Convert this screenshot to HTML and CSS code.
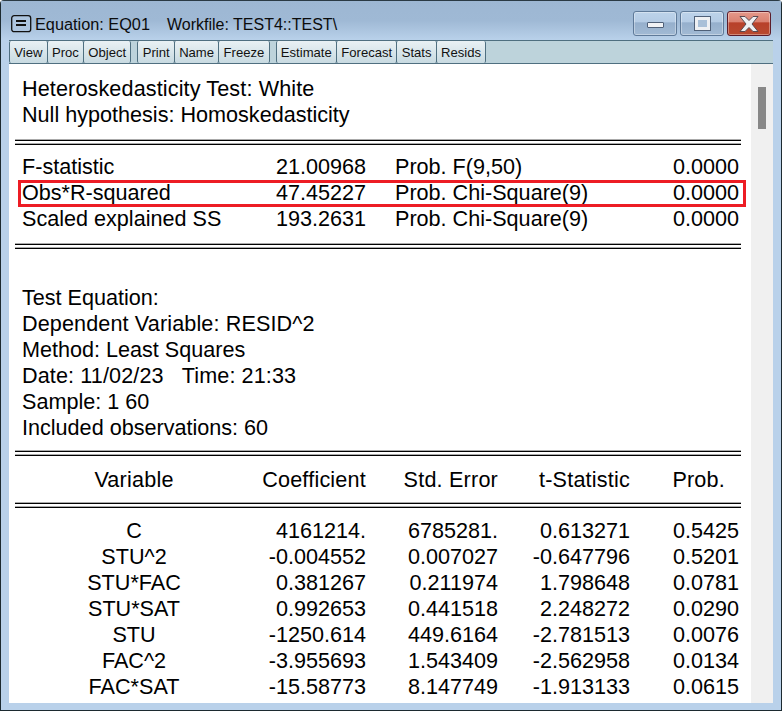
FILE: index.html
```html
<!DOCTYPE html>
<html lang="en">
<head>
<meta charset="utf-8">
<title>Equation: EQ01</title>
<link rel="stylesheet" href="styles.css">
</head>
<body>
<div class="window">
  <div class="titlebar">
    <svg class="sysicon" width="21" height="18" viewBox="0 0 21 18"><rect x="0.7" y="0.7" width="19" height="16" rx="2.5" fill="#adc5df" stroke="#111" stroke-width="1.3"/><rect x="5" y="5" width="10" height="2" fill="#111"/><rect x="5" y="9" width="10" height="2" fill="#111"/></svg>
    <span class="title">Equation: EQ01</span>
    <span class="title workfile">Workfile: TEST4::TEST\</span>
    <div class="controls">
      <div class="ctl"><span class="min"></span></div>
      <div class="ctl"><span class="max"></span></div>
      <div class="ctl close">
        <svg width="20" height="16" viewBox="0 0 20 16"><path d="M1 .5h5l4 4 4-4h5l-6 7.5 6 7.5h-5l-4-4-4 4H1l6-7.5z" fill="#eef0f3" stroke="#5a4a50" stroke-width="1"/></svg>
      </div>
    </div>
  </div>
  <div class="toolbar">
    <div class="group"><span class="tb">View</span><span class="tb">Proc</span><span class="tb">Object</span></div>
    <div class="group"><span class="tb">Print</span><span class="tb">Name</span><span class="tb">Freeze</span></div>
    <div class="group"><span class="tb">Estimate</span><span class="tb">Forecast</span><span class="tb">Stats</span><span class="tb">Resids</span></div>
  </div>
  <div class="client">
    <div class="output">
      <div class="line wide">Heteroskedasticity Test: White</div>
      <div class="line">Null hypothesis: Homoskedasticity</div>
      <div class="rule r1"></div>
      <div class="stat"><span>F-statistic</span><span class="num">21.00968</span><span class="prob">Prob. F(9,50)</span><span class="num">0.0000</span></div>
      <div class="stat hl"><span>Obs*R-squared</span><span class="num">47.45227</span><span class="prob">Prob. Chi-Square(9)</span><span class="num">0.0000</span></div>
      <div class="stat"><span>Scaled explained SS</span><span class="num">193.2631</span><span class="prob">Prob. Chi-Square(9)</span><span class="num">0.0000</span></div>
      <div class="rule r2"></div>
      <div class="block">
        <div class="line">Test Equation:</div>
        <div class="line wide">Dependent Variable: RESID^2</div>
        <div class="line">Method: Least Squares</div>
        <div class="line wide">Date: 11/02/23&nbsp;&nbsp; Time: 21:33</div>
        <div class="line">Sample: 1 60</div>
        <div class="line">Included observations: 60</div>
      </div>
      <div class="rule r3"></div>
      <div class="row head"><span class="var">Variable</span><span class="num">Coefficient</span><span class="num">Std. Error</span><span class="num">t-Statistic</span><span class="num last">Prob.</span></div>
      <div class="rule r4"></div>
      <div class="row"><span class="var">C</span><span class="num">4161214.</span><span class="num">6785281.</span><span class="num">0.613271</span><span class="num">0.5425</span></div>
      <div class="row"><span class="var">STU^2</span><span class="num">-0.004552</span><span class="num">0.007027</span><span class="num">-0.647796</span><span class="num">0.5201</span></div>
      <div class="row"><span class="var">STU*FAC</span><span class="num">0.381267</span><span class="num">0.211974</span><span class="num">1.798648</span><span class="num">0.0781</span></div>
      <div class="row"><span class="var">STU*SAT</span><span class="num">0.992653</span><span class="num">0.441518</span><span class="num">2.248272</span><span class="num">0.0290</span></div>
      <div class="row"><span class="var">STU</span><span class="num">-1250.614</span><span class="num">449.6164</span><span class="num">-2.781513</span><span class="num">0.0076</span></div>
      <div class="row"><span class="var">FAC^2</span><span class="num">-3.955693</span><span class="num">1.543409</span><span class="num">-2.562958</span><span class="num">0.0134</span></div>
      <div class="row"><span class="var">FAC*SAT</span><span class="num">-15.58773</span><span class="num">8.147749</span><span class="num">-1.913133</span><span class="num">0.0615</span></div>
    </div>
    <div class="scrollbar"><div class="thumb"></div></div>
  </div>
</div>
</body>
</html>
```
FILE: styles.css
```css
* { box-sizing: border-box; }
html, body { margin: 0; height: 100%; }
body { background: #fff; overflow: hidden; }
.window {
  width: 782px; height: 711px;
  display: flex; flex-direction: column;
  background: #b9d1ea;
  border: 1px solid #1c2a30;
  border-top-color: #2a3a44;
  border-radius: 4px 4px 0 0;
  padding: 0 8px 7px;
  font-family: "Liberation Sans", Arial, sans-serif;
  color: #000;
}
.titlebar {
  height: 39px; margin: 0 -8px; padding: 10px 10px 0 10px;
  display: flex; align-items: flex-start;
  background: linear-gradient(#9db7d3 0, #9fb9d5 50%, #b9d1ea 100%);
  font-size: 16.3px;
}
.sysicon { margin-top: 4px; margin-right: 3px; flex: none; }
.title { color: #0c0c0c; line-height: 27px; white-space: nowrap; }
.workfile { margin-left: 17px; font-size: 16px; }
.controls { margin-left: auto; display: flex; gap: 3px; }
.ctl {
  width: 44px; height: 25px; display: flex; align-items: center; justify-content: center;
  border: 1px solid #5f7a99; border-radius: 3px;
  background: linear-gradient(#bdd3ea 0, #b4cbe4 45%, #95afcc 46%, #a2bad4 100%);
  box-shadow: inset 0 0 0 1px rgba(255,255,255,.35);
}
.close {
  border-color: #5b1c2a;
  background: linear-gradient(#e5988a 0, #d98070 45%, #b8402a 46%, #b84a30 100%);
}
.min { display: block; width: 17px; height: 6px; background: #f0f2f5; border: 1px solid #4f6078; border-radius: 1px; margin-top: 2px; }
.max { display: block; width: 15px; height: 13px; background: #a9c0d8; border: 3px solid #eef0f3; outline: 1px solid #4f6078; }
.toolbar {
  height: 24px; display: flex; gap: 7px;
  background: #bdd3db;
  border-top: 1px solid #4f6f80;
  border-bottom: 1px solid #4f6f80;
}
.group { display: flex; }
.tb {
  display: flex; align-items: center;
  padding: 0 4.25px; height: 22px;
  font-size: 13.1px; color: #111;
  background: linear-gradient(#e9f1f4, #c8dae1);
  border-left: 1px solid #4f6f80; border-right: 1px solid #4f6f80;
  border-radius: 2px;
  margin-left: -1px;
}
.group:first-child .tb:first-child { margin-left: 0; }
.client { flex: 1; min-height: 0; display: flex; background: #fff; overflow: hidden; }
.output { flex: 1; min-width: 0; padding: 12px 10px 0 6px; overflow: hidden; font-size: 21.6px; }
.line { height: 26px; line-height: 26px; padding-left: 7px; white-space: nowrap; }
.wide { letter-spacing: .12px; }
.rule {
  height: 6px;
  background: linear-gradient(#aaa 0 1px, #000 1px 2px, #fff 2px 4px, #aaa 4px 5px, #000 5px 6px);
}
.r1 { margin-top: 11px; margin-bottom: 9px; }
.r2 { margin-top: 11px; margin-bottom: 36px; }
.r3 { margin-top: 9px; margin-bottom: 11px; }
.r4 { margin-top: 9px; margin-bottom: 10px; }
.stat, .row { height: 26px; line-height: 26px; display: grid; white-space: nowrap; }
.stat { grid-template-columns: 344px 1fr auto; padding: 0 2px 0 7px; position: relative; }
.stat > span:first-child { grid-column: 1; grid-row: 1; }
.stat > .num:nth-child(2) { grid-column: 1; grid-row: 1; }
.stat > .prob { grid-column: 2; padding-left: 29px; }
.stat > .num:last-child { grid-column: 3; }
.stat.hl::after {
  content: ""; position: absolute; left: 3px; right: -5px; top: 0; bottom: -1px;
  border: 3px solid #ed1c24;
}
.num { text-align: right; }
.row { grid-template-columns: 238px 113px 132px 132px 109px; }
.head span { letter-spacing: .2px; }
.var { text-align: center; }
.last { padding-right: 14px; }
.scrollbar { width: 22px; background: #f0f0f0; flex: none; padding: 23px 7px 0 7px; }
.thumb { width: 8px; height: 42px; background: #888; }
```
